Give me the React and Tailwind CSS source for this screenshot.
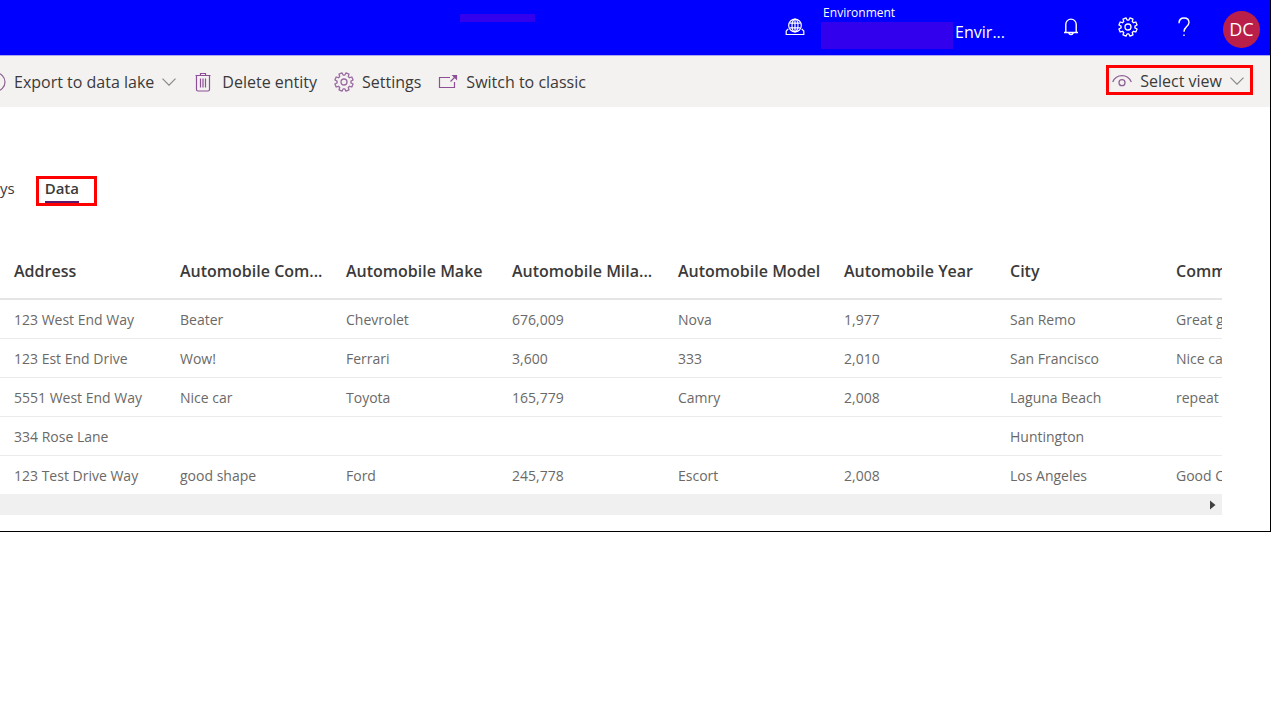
import React from "react";

const columns = [
  "Address",
  "Automobile Com...",
  "Automobile Make",
  "Automobile Mila...",
  "Automobile Model",
  "Automobile Year",
  "City",
  "Comm",
];

const rows = [
  ["123 West End Way", "Beater", "Chevrolet", "676,009", "Nova", "1,977", "San Remo", "Great g"],
  ["123 Est End Drive", "Wow!", "Ferrari", "3,600", "333", "2,010", "San Francisco", "Nice car"],
  ["5551 West End Way", "Nice car", "Toyota", "165,779", "Camry", "2,008", "Laguna Beach", "repeat c"],
  ["334 Rose Lane", "", "", "", "", "", "Huntington", ""],
  ["123 Test Drive Way", "good shape", "Ford", "245,778", "Escort", "2,008", "Los Angeles", "Good C"],
];

// Eight-toothed wheel: each tooth is given by two outer and two inner points.
const GEAR =
  "M" +
  Array.from({ length: 8 }, (_, k) =>
    [
      [-15, 7],
      [-10, 9.3],
      [10, 9.3],
      [15, 7],
    ].map(([offset, radius]) => {
      const a = ((22.5 + k * 45 + offset) * Math.PI) / 180;
      return `${(10 + radius * Math.cos(a)).toFixed(2)} ${(10 + radius * Math.sin(a)).toFixed(2)}`;
    }).join("L")
  ).join("L") +
  "Z";

function Gear({ className }) {
  return (
    <svg className={className} viewBox="0 0 20 20" fill="none" stroke="currentColor" strokeWidth="1.300" strokeLinejoin="round" aria-hidden="true">
      <path d={GEAR} />
      <circle cx="10" cy="10" r="3" />
    </svg>
  );
}

function Chevron() {
  return (
    <svg className="h-2 w-[14px] shrink-0 text-[#8a8886]" viewBox="0 0 14 8" fill="none" stroke="currentColor" strokeWidth="1.200" aria-hidden="true">
      <path d="M.5.700 7 7.200 13.500.700" />
    </svg>
  );
}

function Globe() {
  return (
    <svg className="h-[18px] w-5 shrink-0" viewBox="0 0 20 18" fill="none" stroke="currentColor" strokeWidth="1.200" aria-hidden="true">
      <circle cx="10" cy="7.500" r="6.300" />
      <ellipse cx="10" cy="7.500" rx="3" ry="6.300" />
      <path d="M10 1.200v12.600M4.700 5.200h10.600M4.700 9.800h10.600" />
      <path d="M3.300 10.800 1.200 13v3.500h17.600V13l-2.100-2.200" />
    </svg>
  );
}

function Bell() {
  return (
    <svg className="h-[18px] w-4" viewBox="0 0 16 18" fill="none" stroke="currentColor" strokeWidth="1.400" aria-hidden="true">
      <path d="M1 14.500h14M2.800 14.500V6.300a5.200 5.200 0 0 1 10.400 0v8.200" />
      <path d="M6 14.500a2 2 0 0 0 4 0" />
    </svg>
  );
}

function Help() {
  return (
    <svg className="h-5 w-3" viewBox="0 0 12 20" fill="none" stroke="currentColor" strokeWidth="1.400" aria-hidden="true">
      <path d="M1 6.200C1 3 3 1 6 1s5 1.900 5 4.600c0 2.300-1.400 3.300-2.800 4.500C6.800 11.300 6 12.200 6 14.800" />
      <path d="M6 17.500V19" />
    </svg>
  );
}

function Trash() {
  return (
    <svg className="h-5 w-4 shrink-0 text-[#8d4f98]" viewBox="0 0 16 20" fill="none" stroke="currentColor" strokeWidth="1.200" aria-hidden="true">
      <path d="M.5 3.500h15M5.500 3.500v-2h5v2M1.500 3.500v14a1.500 1.500 0 0 0 1.500 1.500h10a1.500 1.500 0 0 0 1.500-1.500v-14" />
      <path d="M5.500 6.500v9M8 6.500v9M10.500 6.500v9" />
    </svg>
  );
}

function OpenWindow() {
  return (
    <svg className="h-4 w-5 shrink-0 text-[#8d4f98]" viewBox="0 0 20 16" fill="none" stroke="currentColor" strokeWidth="1.200" aria-hidden="true">
      <path d="M12 3.500H1.500v10h15V8M12.500 7.500l5-5" />
      <path d="M15 1.500h3.500V5z" fill="currentColor" />
    </svg>
  );
}

function Eye() {
  return (
    <svg className="h-3 w-5 shrink-0 text-[#8d6194]" viewBox="0 0 20 12" fill="none" stroke="currentColor" strokeWidth="1.300" aria-hidden="true">
      <path d="M.7 7C2.500 3 6 .7 10 .7S17.500 3 19.300 7" />
      <circle cx="10" cy="7.700" r="3" />
    </svg>
  );
}

export default function App() {
  return (
    <div className="min-h-screen bg-white font-['Open_Sans','Noto_Sans',sans-serif] text-[#3b3a39]">
      <div className="mr-[9px] overflow-hidden border-r border-b border-black">
        <header className="flex h-[55px] items-center bg-[#0000ff] text-white">
          <div className="flex flex-1 self-start pt-[14px] pl-[460px]">
            <div className="h-2 w-[75px] bg-[#3300ee]" />
          </div>
          <button type="button" className="mr-[58px] flex items-center gap-4 pb-[2px] text-left" aria-label="Environment">
            <Globe />
            <span className="flex flex-col">
              <span className="pl-[2px] text-xs leading-[18px]">Environment</span>
              <span className="flex h-7 gap-[2px]">
                <span className="h-[27px] w-[132px] bg-[#3300ee]" />
                <span className="text-base leading-5">Envir...</span>
              </span>
            </span>
          </button>
          <nav className="flex items-center pb-[1px]">
            <button type="button" aria-label="Notifications"><Bell /></button>
            <button type="button" aria-label="Settings" className="ml-[39px]"><Gear className="size-5" /></button>
            <button type="button" aria-label="Help" className="ml-10"><Help /></button>
            <button type="button" className="mt-1 mr-[10px] ml-[33px] size-[37px] rounded-full bg-[#b91f48] text-lg leading-none">DC</button>
          </nav>
        </header>

        <div className="flex h-[52px] items-center border-t border-[#a9a5f0] bg-[#f3f2f1] text-base">
          <button type="button" className="flex items-center gap-2 whitespace-nowrap">
            <svg className="h-5 w-[6px] shrink-0 text-[#8d6194]" viewBox="0 0 6 20" fill="none" stroke="currentColor" strokeWidth="1.200" aria-hidden="true">
              <circle cx="-4" cy="10" r="9" />
            </svg>
            <span>Export to data lake</span>
            <Chevron />
          </button>
          <button type="button" className="ml-[19px] flex items-center gap-[11px] whitespace-nowrap">
            <Trash />Delete entity
          </button>
          <button type="button" className="ml-[17px] flex items-center gap-2 whitespace-nowrap">
            <Gear className="size-5 text-[#9a6ba1]" />Settings
          </button>
          <button type="button" className="ml-[17px] flex items-center gap-2 whitespace-nowrap">
            <OpenWindow />Switch to classic
          </button>
          <button type="button" className="mt-[9px] mr-[17px] ml-auto flex h-[30px] items-center gap-2 self-start border-3 border-[#ff0000] pt-[2px] pr-[6px] pl-[3px] whitespace-nowrap">
            <Eye />
            <span>Select view</span>
            <Chevron />
          </button>
        </div>

        <div role="tablist" className="flex items-start pt-[69px] text-[15px]">
          <button type="button" role="tab" aria-selected="false" className="mr-[21px] leading-6">ys</button>
          <button type="button" role="tab" aria-selected="true" className="flex h-[30px] w-[61px] border-3 border-[#ff0000] pl-[6px] font-semibold">
            <span className="h-6 border-b-2 border-[#5c1a6e] leading-[18px]">Data</span>
          </button>
        </div>

        <div className="mt-[38px] mr-12 mb-4 overflow-hidden">
          <table className="w-[1328px] table-fixed border-collapse text-left whitespace-nowrap">
            <thead>
              <tr className="h-[55px] border-b-2 border-[#e6e5e3]">
                {columns.map((c) => (
                  <th key={c} scope="col" className="p-0 pl-[14px] text-base leading-5 font-semibold">{c}</th>
                ))}
              </tr>
            </thead>
            <tbody className="text-sm text-[#6b6967]">
              {rows.map((r) => (
                <tr key={r[0]} className="h-[39px] border-b border-[#edebe9] last:border-0">
                  {r.map((v, i) => (
                    <td key={i} className="p-0 pt-[2px] pl-[14px] leading-5">{v}</td>
                  ))}
                </tr>
              ))}
            </tbody>
          </table>
          <div className="flex h-[21px] items-center justify-end bg-[#f0f0f0] pr-[6px]">
            <button type="button" aria-label="Scroll right">
              <svg className="h-[10px] w-[6px] text-[#404040]" viewBox="0 0 6 10" fill="currentColor" aria-hidden="true">
                <path d="M0 .5 5.500 5 0 9.500z" />
              </svg>
            </button>
          </div>
        </div>
      </div>
    </div>
  );
}
